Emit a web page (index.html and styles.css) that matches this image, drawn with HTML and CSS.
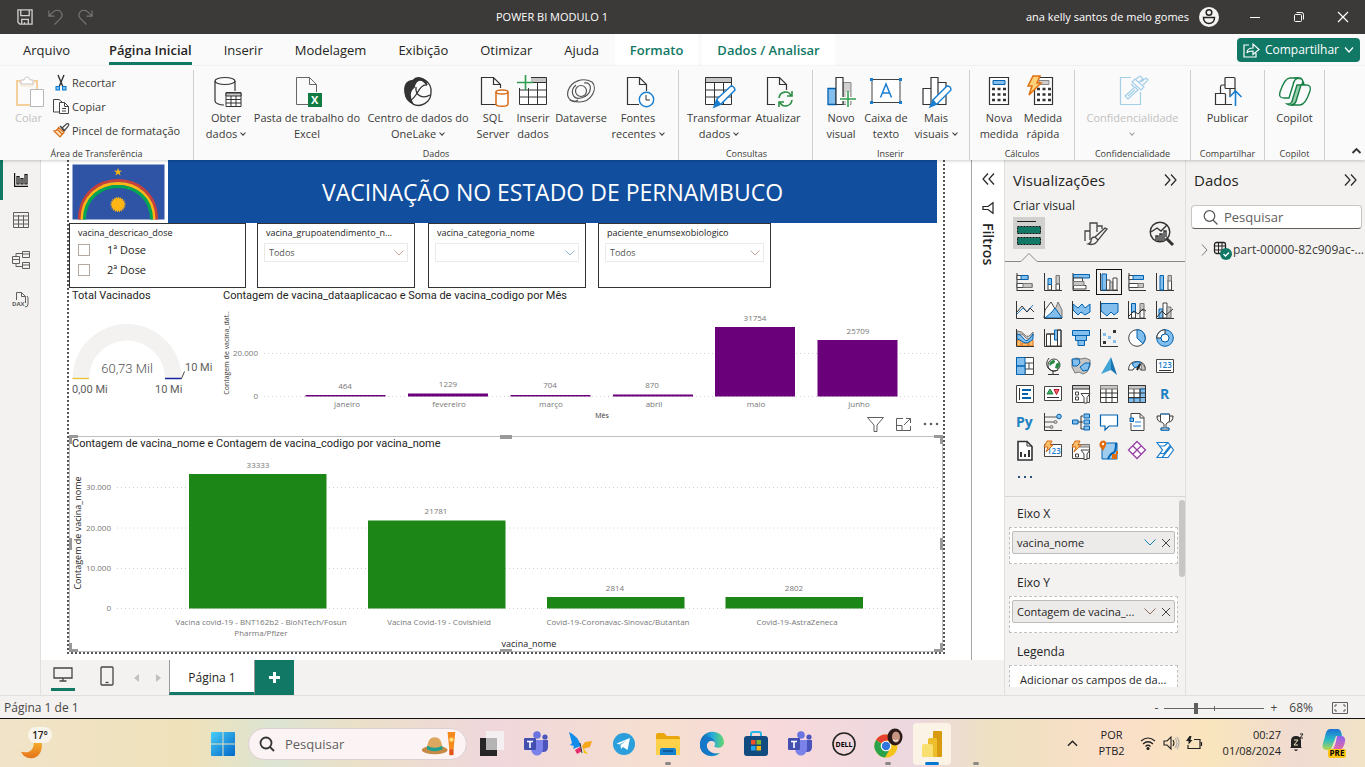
FILE: index.html
```html
<!DOCTYPE html>
<html lang="pt-BR">
<head>
<meta charset="utf-8">
<title>POWER BI MODULO 1</title>
<link rel="stylesheet" href="styles.css">
</head>
<body>
<header class="titlebar">
  <div class="quick">
    <button aria-label="Salvar"><svg width="16" height="16" viewBox="0 0 17 17" fill="none" stroke="#d2d0ce" stroke-width="1.4"><path d="M1 1h15v15H3l-2-2zM4 1v6h9V1M5 16v-5h7v5M8 14v2"/></svg></button>
    <button aria-label="Desfazer"><svg width="15" height="16" viewBox="0 0 16 16" fill="none" stroke="#797775" stroke-width="1.2"><path d="M1 1v6h6M1 7l4-4c3-3 7-3 9 0s1 5-1 7l-6 6"/></svg></button>
    <button aria-label="Refazer"><svg width="15" height="16" viewBox="0 0 16 16" fill="none" stroke="#797775" stroke-width="1.2"><path d="M15 1v6H9M15 7l-4-4C8 0 4 0 2 3s-1 5 1 7l6 6"/></svg></button>
  </div>
  <h1 class="doc-name">POWER BI MODULO 1</h1>
  <div class="account"><span>ana kelly santos de melo gomes</span>
    <svg width="20" height="20" viewBox="0 0 20 20"><circle cx="10" cy="10" r="10" fill="#f3f2f1"/><g fill="none" stroke="#222" stroke-width="1.5"><circle cx="10" cy="5.500" r="2.800"/><path d="M4.500 10.500h11c.5 8-11.500 8-11 0z"/></g></svg></div>
  <div class="win-controls">
    <button aria-label="Minimizar"><svg width="12" height="12" viewBox="0 0 12 12" stroke="#fff"><path d="M1 6.500h10"/></svg></button>
    <button aria-label="Restaurar"><svg width="12" height="12" viewBox="0 0 12 12" stroke="#fff" fill="none"><rect x="1.500" y="3.500" width="7" height="7" rx="1"/><path d="M3.500 1.500h5q2 0 2 2v5"/></svg></button>
    <button aria-label="Fechar"><svg width="12" height="12" viewBox="0 0 12 12" stroke="#fff" stroke-width="1.200"><path d="M1 1l10 10M11 1L1 11"/></svg></button>
  </div>
</header>

<nav class="tabs">
  <a href="#">Arquivo</a><a href="#" class="active">Página Inicial</a><a href="#">Inserir</a><a href="#">Modelagem</a><a href="#">Exibição</a><a href="#">Otimizar</a><a href="#">Ajuda</a><a href="#" class="context">Formato</a><a href="#" class="context">Dados / Analisar</a>
  <button class="share"><svg width="17" height="15" viewBox="0 0 17 15" fill="none" stroke="#fff" stroke-width="1.200"><path d="M6 2H1v12h12v-4M4 10c0-4 3-5 6-5V1l6 5.500-6 5V8C7 8 5 8 4 10z"/></svg>Compartilhar<svg width="10" height="6" viewBox="0 0 10 6" fill="none" stroke="#fff" stroke-width="1.200"><path d="M1 .5l4 4.500 4-4.500"/></svg></button>
</nav>

<section class="ribbon">
  <div class="group g-clip">
    <div class="cmds">
      <button class="cmd w-paste off"><svg width="30" height="32" viewBox="0 0 30 32" fill="none"><path d="M9 5H3v24h13M20 5h3v8" stroke="#f3cf9c" stroke-width="2"/><path d="M5 7h2v3h12V7h2" stroke="#f8e3c5"/><path d="M7 8V4h3c1-4 5-4 6 0h3v4z" stroke="#c8c6c4" fill="#fff"/><path d="M16.500 13.500h13v17h-13z" stroke="#b9b7b5" fill="#fff"/></svg><span>Colar</span></button>
      <div class="stack">
        <button><svg width="18" height="18" viewBox="0 0 18 18" fill="none"><path d="M5 1l5 12M11 1L6 13" stroke="#333" stroke-width="1.400"/><rect x="3" y="12.500" width="3.500" height="3.500" fill="#83beec" stroke="#0078d4"/><rect x="9.500" y="12.500" width="3.500" height="3.500" fill="#83beec" stroke="#0078d4"/></svg>Recortar</button>
        <button><svg width="18" height="18" viewBox="0 0 18 18" fill="none" stroke="#444"><path d="M6 14H.5V1.500H6L9 4M6.500 4.500h5l4 4v7h-9zM11.500 4.500v4h4M9 10.500h4M9 13h4"/></svg>Copiar</button>
        <button><svg width="18" height="18" viewBox="0 0 18 18" fill="none"><path d="M9 6l5-4.500q3 0 1 3L11 9z" stroke="#444" stroke-width="1.200"/><path d="M7 4l5 5" stroke="#444" stroke-width="1.500"/><path d="M5.500 5.500l5.500 5-4 4.500L1 9q3 0 4.500-3.500zM4 7l5 5" fill="#fce0b8" stroke="#d86c14" stroke-width="1.200"/></svg>Pincel de formatação</button>
      </div>
    </div>
    <h2>Área de Transferência</h2>
  </div>
  <div class="group g-data">
    <div class="cmds">
      <button class="cmd w50"><svg width="26" height="32" viewBox="1 0 26 32" fill="none" stroke="#333"><g stroke-width="1.200"><ellipse cx="13" cy="5" rx="10" ry="3.500"/><path d="M3 5V25c0 2 4 4 9 4M23 5V15"/></g><path d="M14 16.500h15v14H14z" fill="#fff"/><path d="M14 17h15v3H14z" fill="#c8c6c4"/><path d="M14 23.500h15M14 27h15M19 20v10.500M24 20v10.500"/></svg><span>Obter<br>dados <i></i></span></button>
      <button class="cmd w112"><svg width="26" height="32" viewBox="4 0 26 32" fill="none"><path d="M18 28.500H6.500v-27h13l7 7V16M19.500 1.500v7h7" stroke="#666"/><path d="M18 17h14v14H18z" fill="#107c41"/><text x="21" y="28" class="excel-x">X</text></svg><span>Pasta de trabalho do<br>Excel</span></button>
      <button class="cmd w110"><svg width="28" height="32" viewBox="0 0 28 32" fill="none" stroke="#333" stroke-width="1.300"><path d="M9 4.500C2 5 0 10 1 17c.6 5 4 9 8 11-4-6-4-13 1-16.500C11 7 13 4 16 4c3 0 5 2 7 5-1-5-9-11-14-4.500z" fill="#333"/><path d="M9 4.500c9-6 19 2 18 12C27 27 16 32 9 28"/><path d="M12 11c-1 9 7 12 14 8M23 9c-8-1-9 11-16 15"/></svg><span>Centro de dados do<br>OneLake <i></i></span></button>
      <button class="cmd w40"><svg width="28" height="32" viewBox="-1 0 28 32" fill="none"><path d="M16 28.500H1.500v-27h12l7 7V12M13.500 1.500v7h7" stroke="#333" stroke-width="1.200"/><path d="M16 16v12c0 3 12 3 12 0V16" fill="#fff" stroke="#d86c14" stroke-width="1.500"/><ellipse cx="22" cy="16" rx="6" ry="2" fill="#fff" stroke="#d86c14" stroke-width="1.500"/></svg><span>SQL<br>Server</span></button>
      <button class="cmd w40"><svg width="30" height="32" viewBox="1 0 30 32" fill="none"><path d="M2.500 1.500h27v27h-27z" fill="#fff" stroke="#333"/><path d="M3 2h26v4H3z" fill="#c8c6c4"/><path d="M3 6.500h27M3 14h27M3 21h27M11.500 6v23M20.500 6v23" stroke="#333"/><path d="M0 0h14v12H0z" fill="#fafafa"/><path d="M0 6.500h16M8.500-1v15" stroke="#2f9e4f" stroke-width="1.600"/></svg><span>Inserir<br>dados</span></button>
      <button class="cmd w56"><svg width="28" height="32" viewBox="0 0 28 32" fill="none" stroke="#555" stroke-width="1.200"><path d="M25 6C16 1 4 5 1 15c-2 8 5 13 10 9"/><path d="M25 6c6 6 0 20-13 20-4 0-6-1-9-2"/><path d="M17 7c9-2 9 12-3 15-8 2-12-7-5-13"/><circle cx="14" cy="15" r="5.500"/></svg><span>Dataverse</span></button>
      <button class="cmd w58"><svg width="28" height="32" viewBox="0 0 28 32" fill="none"><path d="M15 28.500H3.500v-27h12l7 7V15M15.500 1.500v7h7" stroke="#333" stroke-width="1.200"/><circle cx="22.500" cy="23.500" r="7.200" fill="#fff" stroke="#1b7fd0" stroke-width="1.400"/><path d="M22 19v5h4" stroke="#333"/></svg><span>Fontes<br>recentes <i></i></span></button>
    </div>
    <h2>Dados</h2>
  </div>
  <div class="group g-query">
    <div class="cmds">
      <button class="cmd w62"><svg width="30" height="32" viewBox="0 0 30 32" fill="none"><path d="M1.500 1.500h26v27h-26z" fill="#fff" stroke="#333"/><path d="M2 2h25v4H2z" fill="#c8c6c4"/><path d="M2 6.500h26M2 14h26M2 21h26M10.500 6v23M19.500 6v23" stroke="#333"/><path d="M10 31l3-8 14-13q3 0 4 4L17 28z" fill="#fff" stroke="#1b7fd0" stroke-width="1.500"/><path d="M10 31l3-8 4 5z" fill="#1b7fd0"/></svg><span>Transformar<br>dados <i></i></span></button>
      <button class="cmd w56"><svg width="28" height="32" viewBox="1 0 28 32" fill="none"><path d="M12 28.500H4.500v-27h12l7 7V14M16.500 1.500v7h7" stroke="#333" stroke-width="1.200"/><path d="M16 22c1-7 10-8 12-2M29 24c-1 7-10 8-12 2M29 15v5h-5M16 31v-5h5" stroke="#2f8f46" stroke-width="1.600"/></svg><span>Atualizar</span></button>
    </div>
    <h2>Consultas</h2>
  </div>
  <div class="group g-insert">
    <div class="cmds">
      <button class="cmd w44"><svg width="30" height="32" viewBox="0 0 30 32" fill="none"><path d="M2 12.500h8v16H2z" fill="#83beec" stroke="#0063b1" stroke-width="1.300"/><path d="M17 6.500h8v22h-8z" fill="#d2d0ce" stroke="#888"/><path d="M10 1.500h7v27h-7z" fill="#fff" stroke="#333" stroke-width="1.200"/><path d="M14 23h16M22 16v15" stroke="#fafafa" stroke-width="4"/><path d="M14 23h16M22 15v16" stroke="#2f9e4f" stroke-width="1.500"/></svg><span>Novo<br>visual</span></button>
      <button class="cmd w46"><svg width="32" height="32" viewBox="0 0 32 32" fill="none"><path d="M2 3.500h28v23H2z" stroke="#444" fill="#fff"/><g fill="#1b7fd0"><path d="M0 2h3v3H0zM29 2h3v3h-3zM0 25h3v3H0zM29 25h3v3h-3z"/></g><path d="M10.500 21.500L16 8l5.500 13.500M12 17h8" stroke="#1b7fd0" stroke-width="1.500"/></svg><span>Caixa de<br>texto</span></button>
      <button class="cmd w54"><svg width="30" height="32" viewBox="0 0 30 32" fill="none"><path d="M2 12.500h8v16H2zM17 6.500h8v22h-8zM10 1.500h7v27h-7z" fill="#fff" stroke="#333" stroke-width="1.200"/><path d="M9 31l3-7 14-14q4 0 4 4L16 28z" fill="#fff" stroke="#1b7fd0" stroke-width="1.400"/><path d="M9 31l3-8 4 5z" fill="#1b7fd0"/></svg><span>Mais<br>visuais <i></i></span></button>
    </div>
    <h2>Inserir</h2>
  </div>
  <div class="group g-calc">
    <div class="cmds">
      <button class="cmd w44"><svg width="30" height="32" viewBox="0 0 30 32" fill="none"><path d="M5.500 1.500h19v27h-19z" fill="#fff" stroke="#333" stroke-width="1.200"/><path d="M9 4.500h12v4H9z" fill="#83beec" stroke="#0063b1"/><path d="M8 13h14M8 18.500h14M8 24h14" stroke="#333" stroke-width="2.600" stroke-dasharray="3 2.500"/></svg><span>Nova<br>medida</span></button>
      <button class="cmd w44"><svg width="30" height="32" viewBox="3 0 30 32" fill="none"><path d="M9.500 1.500h18v27h-18z" fill="#fff" stroke="#333" stroke-width="1.200"/><path d="M14 4.500h10v4H14z" fill="#d2d0ce" stroke="#888"/><path d="M12 13h14M12 18.500h14M12 24h14" stroke="#333" stroke-width="2.600" stroke-dasharray="3 2.500"/><path d="M8 0h7l-3 7h4L4 19l3-9H3z" fill="#fcd27a" stroke="#e07010" stroke-width="1.500"/></svg><span>Medida<br>rápida</span></button>
    </div>
    <h2>Cálculos</h2>
  </div>
  <div class="group g-conf">
    <div class="cmds">
      <button class="cmd w100 off"><svg width="28" height="32" viewBox="2 0 28 32" fill="none" stroke="#a3cfe9" stroke-width="1.200"><path d="M14 1.500H3.500v27h20V16"/><path d="M8 20l10-9 3 3-10 9zM11 20l7-6"/><path d="M15 6l3-3 9 8-3 3zM19 3l4-3 3 3-4 3M24 6l5-4 2 2-5 5M14 8l3 3"/></svg><span>Confidencialidade<br><i></i></span></button>
    </div>
    <h2>Confidencialidade</h2>
  </div>
  <div class="group g-share">
    <div class="cmds">
      <button class="cmd w56"><svg width="30" height="32" viewBox="0 0 30 32" fill="none" stroke="#333" stroke-width="1.200"><rect x="12" y="1.500" width="10" height="11" rx="1"/><path d="M7.500 18v-7q0-2 2-2H12M2.500 17.500h9q1 0 1 1v10h-10zM12 28.500h7M17 12v8M22 12v3"/><path d="M22.500 30V16M16.500 21l6-6 6 6" stroke="#1b7fd0" stroke-width="1.600"/></svg><span>Publicar</span></button>
    </div>
    <h2>Compartilhar</h2>
  </div>
  <div class="group g-copilot">
    <div class="cmds">
      <button class="cmd w56"><svg width="34" height="32" viewBox="0 0 34 32" fill="none" stroke="#188046" stroke-width="1.400"><path d="M16 2h6c2 0 3 2 4 7h-7l-4 13c-1 5-2 6-6 6 3 2 7 1 9-1l7-22" fill="#9ccfb0"/><path d="M21 2h-9C7 2 4 10 2 16c-1 4 0 6 4 6h5l4-13c1-5 3-7 6-7zM13 29h9c5 0 8-8 10-14 1-4 0-6-4-6h-5l-4 13c-1 5-3 7-6 7z" fill="#fafafa"/></svg><span>Copilot</span></button>
    </div>
    <h2>Copilot</h2>
  </div>
  <button class="collapse" aria-label="Recolher"><svg width="9" height="6" viewBox="0 0 9 6" fill="none" stroke="#333" stroke-width="1.800"><path d="M.5 5l4-4 4 4"/></svg></button>
</section>

<main class="workspace">
  <nav class="views">
    <button class="on" aria-label="Relatório"><svg width="14" height="14" viewBox="0 0 14 14" fill="none" stroke="#111" stroke-width="1.200"><path d="M.6 0v13.400H14M3 3.500h2V11H3zM7 5.500h2V11H7zM11 1.500h2V11h-2z"/></svg></button>
    <button aria-label="Tabela"><svg width="16" height="16" viewBox="0 0 16 16" fill="none" stroke="#605e5c"><path d="M.5.500h15v15H.5zM.5 4h15M.5 8h15M.5 12h15M5.500 3v12M10.500 3v12"/></svg></button>
    <button aria-label="Modelo"><svg width="18" height="18" viewBox="0 0 18 18" fill="none" stroke="#605e5c"><path d="M.5 5.500h7v7h-7zM.5 8.500h7M10.500.500h7v6h-7zM10.500 3h7M10.500 11.500h7v6h-7zM10.500 14h7M4 5V2.500h6.500M4 13v2.500h6.500"/></svg></button>
    <button aria-label="DAX"><svg width="20" height="18" viewBox="0 0 20 18" fill="none" stroke="#605e5c"><path d="M5.500 9V1.500h5l4 4V12M10.500 1.500v4h4M16 5q1 1 1 3v5q0 3-3 3"/><text x="1" y="15" class="dax">DAX</text></svg></button>
  </nav>

  <div class="editor">
    <div class="surface">
      <div class="page">
        <div class="page-head">
          <svg class="flag" width="94" height="57" viewBox="0 0 94 57"><path d="M0 0h94v57H0z" fill="#fff"/><path d="M.5.500h92v55h-92z" fill="#3054a5"/><g fill="none" stroke-width="3"><path d="M7.500 55.500c0-52 77-52 77 0" stroke="#c6403c"/><path d="M10 55.500c0-48 72-48 72 0" stroke="#ffb516"/><path d="M12.500 55.500c0-44 67-44 67 0" stroke="#00a651"/></g><circle cx="46" cy="40.500" r="6.500" fill="#fdb515" stroke="#fdb515" stroke-width="2" stroke-dasharray="1 1"/><path d="M46 4l1 2.800h3l-2.400 1.800.9 2.900-2.500-1.800-2.500 1.800.9-2.900L42 6.800h3z" fill="#fdb515"/></svg>
          <h2 class="banner">VACINAÇÃO NO ESTADO DE PERNAMBUCO</h2>
        </div>
        <div class="slicers">
          <fieldset class="slicer s1"><div class="slicer-title">vacina_descricao_dose</div>
            <label><input type="checkbox">1ª Dose</label><label><input type="checkbox">2ª Dose</label></fieldset>
          <div class="slicer s2"><label class="slicer-title" for="f1">vacina_grupoatendimento_n...</label><div class="drop"><select id="f1"><option>Todos</option></select><svg width="10" height="6" viewBox="0 0 10 6" fill="none" stroke="#c9a79a"><path d="M.5.500L5 5 9.500.500"/></svg></div></div>
          <div class="slicer s3"><label class="slicer-title" for="f2">vacina_categoria_nome</label><div class="drop"><select id="f2"><option></option></select><svg width="10" height="6" viewBox="0 0 10 6" fill="none" stroke="#8fb6d0"><path d="M.5.500L5 5 9.500.500"/></svg></div></div>
          <div class="slicer s4"><label class="slicer-title" for="f3">paciente_enumsexobiologico</label><div class="drop"><select id="f3"><option>Todos</option></select><svg width="10" height="6" viewBox="0 0 10 6" fill="none" stroke="#c9a79a"><path d="M.5.500L5 5 9.500.500"/></svg></div></div>
        </div>
        <div class="row">
          <section class="gauge">
            <h3>Total Vacinados</h3>
            <svg viewBox="69 304 151 132"><path d="M72.500 378.500a54.500 54.500 0 0 1 109 0H165a38 38 0 0 0-76 0z" fill="#f3f2f1"/><path d="M72.500 378.500H89" stroke="#e8c22e" stroke-width="1.300"/><path d="M165 378.500h16.500" stroke="#12239e" stroke-width="1.500"/><path d="M181.500 378.500l3-7" stroke="#444"/>
            <text x="127" y="373" class="big">60,73 Mil</text><text x="185" y="371" class="mid">10 Mi</text><text x="72" y="393" class="mid">0,00 Mi</text><text x="155" y="393" class="mid">10 Mi</text></svg>
          </section>
          <section class="months">
            <h3>Contagem de vacina_dataaplicacao e Soma de vacina_codigo por Mês</h3>
            <svg viewBox="220 304 723 132">
              <path d="M264 353.500h676M264 396.500h676" class="gridline"/>
              <g class="tick end"><text x="258" y="356">20.000</text><text x="258" y="399">0</text></g>
              <g fill="#6b007b"><path d="M305.500 395h80v1.500h-80zM408 393.500h80v3h-80zM510.500 395h80v1.500h-80zM613 394.500h80v2h-80zM715 327h80v69.500h-80zM817.500 340h80v56.500h-80z"/></g>
              <g class="tick"><text x="345" y="389">464</text><text x="448" y="387">1229</text><text x="550" y="388">704</text><text x="652" y="388">870</text><text x="755" y="321">31754</text><text x="858" y="334">25709</text>
              <text x="347" y="407">janeiro</text><text x="449" y="407">fevereiro</text><text x="551" y="407">março</text><text x="654" y="407">abril</text><text x="756" y="407">maio</text><text x="859" y="407">junho</text></g>
              <text x="602" y="418" class="axis-small">Mês</text>
              <text transform="translate(229 353) rotate(-90)" class="axis-small">Contagem de vacina_dat..</text>
            </svg>
          </section>
        </div>
        <section class="vaccines">
          <div class="visual-tools">
            <button aria-label="Filtros"><svg width="17" height="15" viewBox="0 0 17 15" fill="none" stroke="#605e5c"><path d="M.5.500h16L10 8v6.500H7V8z"/></svg></button>
            <button aria-label="Modo de foco"><svg width="15" height="13" viewBox="0 0 15 13" fill="none" stroke="#605e5c"><path d="M7 .5H.5v12h14V8M14.500 5V.5H10M14.500.500L8 7M.5 7.500H6v5"/></svg></button>
            <button aria-label="Mais opções"><svg width="16" height="4" viewBox="0 0 16 4" fill="#605e5c"><circle cx="2" cy="2" r="1.300"/><circle cx="8" cy="2" r="1.300"/><circle cx="14" cy="2" r="1.300"/></svg></button>
          </div>
          <h3>Contagem de vacina_nome e Contagem de vacina_codigo por vacina_nome</h3>
          <svg viewBox="69 452 874 200">
            <path d="M117 487.500h822M117 528h822M117 568.500h822M117 608.500h822" class="gridline"/>
            <path d="M189 474h137.500v134.500H189zM368 520.500h137.500v88H368zM547 597h137.500v11.500H547zM725.500 597H863v11.500H725.500z" fill="#1c8617"/>
            <g class="tick end"><text x="111" y="490">30.000</text><text x="111" y="531">20.000</text><text x="111" y="571">10.000</text><text x="111" y="611">0</text></g>
            <g class="tick"><text x="258" y="468">33333</text><text x="436" y="514">21781</text><text x="615" y="591">2814</text><text x="794" y="591">2802</text>
            <text x="261" y="625">Vacina covid-19 - BNT162b2 - BioNTech/Fosun</text><text x="261" y="636">Pharma/Pfizer</text><text x="439" y="625">Vacina Covid-19 - Covishield</text><text x="618" y="625">Covid-19-Coronavac-Sinovac/Butantan</text><text x="797" y="625">Covid-19-AstraZeneca</text></g>
            <text x="529" y="647" class="axis">vacina_nome</text>
            <text transform="translate(81 533) rotate(-90)" class="axis">Contagem de vacina_nome</text>
          </svg>
          <span class="h tl"></span><span class="h tr"></span><span class="h bl-c"></span><span class="h br"></span><span class="h tc"></span><span class="h bc"></span><span class="h ml"></span><span class="h mr"></span>
        </section>
      </div>
    </div>
    <aside class="filters">
      <svg width="13" height="12" viewBox="0 0 13 12" fill="none" stroke="#252423" stroke-width="1.200"><path d="M6 .5L1 6l5 5.500M12 .5L7 6l5 5.500"/></svg>
      <svg width="12" height="12" viewBox="0 0 12 12" fill="none" stroke="#252423" stroke-width="1.200"><path d="M11 .8v10.400L6 7.500 1 7.500 1 4.500 6 4.500z"/></svg>
      <h2>Filtros</h2>
    </aside>
    <footer class="page-tabs">
      <button class="dev sel" aria-label="Computador"><svg width="20" height="15" viewBox="0 0 20 15" fill="none" stroke="#484644" stroke-width="1.300"><path d="M1 1h18v10H1zM10 11v3M6.500 14h7"/></svg></button>
      <button class="dev phone" aria-label="Celular"><svg width="14" height="20" viewBox="0 0 14 20" fill="none" stroke="#484644" stroke-width="1.300"><rect x="1" y="1" width="12" height="18" rx="1"/><path d="M5.500 16.500h3"/></svg></button>
      <button class="arr" aria-label="Anterior"><svg width="5" height="8" viewBox="0 0 5 8"><path d="M5 0v8L0 4z" fill="#c2c0be"/></svg></button>
      <button class="arr" aria-label="Próxima"><svg width="5" height="8" viewBox="0 0 5 8"><path d="M0 0v8l5-4z" fill="#c2c0be"/></svg></button>
      <button class="ptab">Página 1</button>
      <button class="add" aria-label="Nova página"><svg width="11" height="11" viewBox="0 0 11 11"><path d="M5.500 0v11M0 5.500h11" stroke="#fff" stroke-width="3"/></svg></button>
    </footer>
  </div>

  <aside class="pane viz">
    <header><h2>Visualizações</h2><svg width="13" height="12" viewBox="0 0 13 12" fill="none" stroke="#252423" stroke-width="1.200"><path d="M1 .5L6 6l-5 5.500M7 .5l5 5.500-5 5.500"/></svg></header>
    <h3>Criar visual</h3>
    <div class="modes">
      <button class="sel" aria-label="Criar visual"><svg width="24" height="25" viewBox="0 0 24 25"><path d="M0 .5h19" stroke="#222"/><g fill="#117865" stroke="#111" stroke-dasharray="2 1"><path d="M.5 5.500h23v7H.5zM.5 16.500h23v7H.5z"/></g></svg></button>
      <button aria-label="Formatar visual"><svg width="24" height="25" viewBox="0 0 24 25" fill="none" stroke="#444" stroke-width="1.300"><path d="M2 20V10h5v9M7 10V2h7v9M14 5h5v3"/><path d="M22 7L12 16q-4 0-4 4 0 2-3 3 7 2 10-4l9-11z" fill="#f3f2f1"/><path d="M12 16l3 3"/></svg></button>
      <button aria-label="Análise"><svg width="25" height="25" viewBox="0 0 25 25" fill="none" stroke="#333" stroke-width="1.400"><circle cx="11" cy="11" r="9.800"/><path d="M17 17l7 7" stroke-width="3"/><path d="M2 11l6-4 4 3 6-6M7 19v-4h2v5M11 20v-7h2v7M15 19v-9h2v6"/></svg></button>
    </div>
    <svg class="notch" viewBox="0 0 180 9" fill="none" stroke="#8a8886"><path d="M0 8.500h16l8-8 8 8h148"/></svg>
    <div class="gallery">
      <button><svg viewBox="0 0 18 18"><path d="M1 0v18M1 17.500h17" class="k"/><path d="M1 2.500h11v4H1z" class="w"/><path d="M5 2.500h7v4H5z" class="b"/><path d="M1 10.500h15v4H1z" class="w"/><path d="M7 10.500h9v4H7z" class="g"/></svg></button>
      <button><svg viewBox="0 0 18 18"><path d="M.5 0v17.500H18" class="k"/><path d="M4 11h3.500v6H4zM12 11h3.500v6H12z" class="w"/><path d="M4 5.500h3.500v6H4z" class="b"/><path d="M12 2.500h3.500v8H12z" class="g"/></svg></button>
      <button><svg viewBox="0 0 18 18"><path d="M1 0v17.500h17" class="k"/><path d="M1.500 1.500h16v3.500h-16z" class="b"/><path d="M1.500 5h9v3.500h-9zM1.500 12.500H14V16H1.500z" class="w"/><path d="M1.500 8.500H12v4H1.500z" class="g"/></svg></button>
      <button class="sel"><svg viewBox="0 0 18 18"><path d="M.5 0v17.500H18" class="k"/><path d="M2 1h4.500v16H2z" class="b"/><path d="M6.500 7h3.500v10H6.500z" class="w"/><path d="M10 9h3v8h-3z" class="g"/><path d="M13 5h4v12h-4z" class="w"/></svg></button>
      <button><svg viewBox="0 0 18 18"><path d="M1 0v17.500h17" class="k"/><path d="M1 2.500h14v4H1z" class="w"/><path d="M5 2.500h10.500v4H5z" class="b"/><path d="M1 10.500h14v4H1z" class="w"/><path d="M10 10.500h5.500v4H10z" class="g"/></svg></button>
      <button><svg viewBox="0 0 18 18"><path d="M.5 0v17.500H18" class="k"/><path d="M4 2.500h3.500V17H4z" class="b"/><path d="M12 7h3.500v10H12z" class="w"/><path d="M12 2.500h3.500V8H12z" class="g"/></svg></button>

      <button><svg viewBox="0 0 18 18"><path d="M.5 0v17.500H18" class="k"/><path d="M1 13l6-6 4 4 6-7" class="bl"/><path d="M1 11l5-6 5 6 3-4 4 4" class="k"/></svg></button>
      <button><svg viewBox="0 0 18 18"><path d="M8 17l6-16 4 8v8z" class="g"/><path d="M0 17l1-8 6-8 7 12 3 4z" class="w"/><path d="M1 17l7-6 3-4 7 10z" class="b"/><path d="M.5 0v17.500H18" class="k"/></svg></button>
      <button><svg viewBox="0 0 18 18"><path d="M1 3l5 4 4-4 3 4 5-4v8l-5 3-4-3-3 3-5-5z" class="b"/><path d="M.5 0v17.500H18" class="k"/></svg></button>
      <button><svg viewBox="0 0 18 18"><path d="M1 2.500h17V11l-4 3-3-3-4 4-6-5z" class="b"/><path d="M.5 0v17.500H18" class="k"/></svg></button>
      <button><svg viewBox="0 0 18 18"><path d="M3.500 9h4v8h-4zM12 9h4v8h-4z" class="w"/><path d="M3.500 2.500h4V11h-4z" class="b"/><path d="M12 2.500h4V9h-4z" class="g"/><path d="M.5 0v17.500H18M1 15l5-5 4 3 5-5 3 2" class="k"/></svg></button>
      <button><svg viewBox="0 0 18 18"><path d="M3 8h4v9H3z" class="b"/><path d="M7 2h4v15H7z" class="w"/><path d="M11 6h4v11h-4z" class="g"/><path d="M.5 0v17.500H18M1 16l5-6 4 4 7-6" class="k"/></svg></button>

      <button><svg viewBox="0 0 18 18"><path d="M1 2q5 0 8 4t8-3v4q-5 6-8 1T1 7z" class="g"/><path d="M1 11h4v6H1zM13 11h4v6h-4zM6 14h6v3H6z" class="o"/><path d="M1 5q4 0 7 5t9-5v5q-6 6-10 3T1 10z" class="b"/><path d="M.5 0v17.500H18" class="k"/></svg></button>
      <button><svg viewBox="0 0 18 18"><path d="M2.500 5h4v12h-4zM6.500 5h4v5h3v7h-7zM13.500 1H17v16h-3.500z" class="w"/><path d="M10.500 1h3v10h-3z" class="b"/><path d="M.5 0v17.500H18M2.500 17V5h8M13.500 17V1H17v16" class="k"/></svg></button>
      <button><svg viewBox="0 0 18 18"><path d="M.5 1.500h17v5H.5zM3.500 6.500h11v5h-11zM6 11.500h6.500v5H6z" class="b"/></svg></button>
      <button><svg viewBox="0 0 18 18"><path d="M.5 0v17.500H18" class="k"/><path d="M3 4h3v3H3zM8 7h3v3H8zM13 11h3v3h-3z" fill="#83beec"/><path d="M13 1h3v3h-3zM3 12h3v3H3z" fill="#333"/></svg></button>
      <button><svg viewBox="0 0 18 18"><circle cx="9" cy="9" r="8.300" class="w"/><path d="M9 .7a8.300 8.300 0 0 1 6 14L9 9z" class="b"/></svg></button>
      <button><svg viewBox="0 0 18 18"><circle cx="9" cy="9" r="8.300" class="b"/><path d="M9 .7A8.300 8.300 0 0 0 .7 9H5q0-4 4-4z" fill="#fff" stroke="#333"/><circle cx="9" cy="9" r="4" fill="#fff" stroke="#0063b1"/></svg></button>

      <button><svg viewBox="0 0 18 18"><path d="M.5.500h17v17H.5zM9 6h8M9 6v11M13 6v6M9 12h8" class="w"/><path d="M.5.500H9V9H.5zM.5 9H9v8.500H.5z" class="b"/></svg></button>
      <button><svg viewBox="0 0 18 18"><circle cx="10" cy="8" r="6" class="w"/><path d="M7 4q3-2 4 0 0 3-3 3L6 9q-2-3 1-5zM12 7l3-2 1 3-2 4-3-1z" fill="#2a8a45"/><path d="M5 1q-4 5-1 10 4 5 10 2M9 14v3M4 17.500h11" class="k"/></svg></button>
      <button><svg viewBox="0 0 18 18"><path d="M0 3l4-2 5 1 4-1 5 2v6l-3 6-4 2-4-2-4 1-3-6z" class="g"/><path d="M0 2h7l1 4-3 3H1zM8 10l5-4h5l-2 7-5 1z" class="b"/></svg></button>
      <button><svg viewBox="0 0 18 18"><path d="M11 0L1 17l10-4z" fill="#3fa3d6"/><path d="M11 0v13l6 5z" fill="#1b74b0"/></svg></button>
      <button><svg viewBox="0 0 18 18"><path d="M.5 13q0-8.500 8.500-8.500t8.500 8.500h-5q0-3-3.500-3t-4 3z" class="w"/><path d="M4 7q5-4 9-1l-2 4q-3-1-4 1z" class="b"/><path d="M13 6q4 2 4.500 7h-4z" class="g"/><path d="M9 13l3-6" stroke="#222" stroke-width="2"/></svg></button>
      <button><svg viewBox="0 0 18 18"><path d="M.5 2.500h17v13H.5z" class="w"/><text x="2" y="11" class="num">123</text><path d="M3 13.500h12" class="k"/></svg></button>

      <button><svg viewBox="0 0 18 18"><path d="M.5.500h17v17H.5z" class="w"/><path d="M3.500 3v12" class="k"/><path d="M6 5h9M6 9h6M6 13h9" stroke="#0063b1" stroke-width="1.800"/></svg></button>
      <button><svg viewBox="0 0 18 18"><path d="M.5 1.500h17v14H.5z" class="w"/><path d="M3 9l3-5 3 5z" fill="#3aaf63" stroke="#208040"/><path d="M10 4.500h5l-2.500 5z" fill="#f06470" stroke="#c01c2c"/><path d="M3 12.500h12" class="k"/></svg></button>
      <button><svg viewBox="0 0 18 18"><path d="M.5.500h17v17H.5z" class="w"/><path d="M.5.500h17V4H.5z" fill="#c8c6c4" stroke="#333"/><path d="M3.500 7h3v3h-3zM3.500 12h3v3h-3z" class="w"/><path d="M9 8.500h9l-3 4V18h-3v-5.500z" class="w"/></svg></button>
      <button><svg viewBox="0 0 18 18"><path d="M.5.500h17v17H.5z" class="w"/><path d="M.5.500h17V4H.5z" class="g"/><path d="M0 8h18M0 12.500h18M6 4v14M12 4v14" class="k"/></svg></button>
      <button><svg viewBox="0 0 18 18"><path d="M.5.500h17v17H.5z" class="w"/><path d="M.5.500h17V4H.5z" class="g"/><path d="M12 4h5.500v13.500h-17V13H12z" class="b"/><path d="M0 8h18M0 12.500h18M6 4v14M12 4v14M.5.500h17v17H.5z" class="k"/></svg></button>
      <button><svg viewBox="0 0 18 18"><text x="4" y="14" class="lang">R</text></svg></button>

      <button><svg viewBox="0 0 18 18"><text x="0" y="14" class="lang">Py</text></svg></button>
      <button><svg viewBox="0 0 18 18"><path d="M.5 0v17.500H18" class="k"/><path d="M1 4h12M1 9h9M1 14h5" stroke="#555"/><circle cx="15" cy="3.500" r="2.300" class="b"/><circle cx="11.500" cy="9" r="1.500" class="g"/><circle cx="7.500" cy="14" r="1.500" class="g"/></svg></button>
      <button><svg viewBox="0 0 18 18"><path d="M6 9h5M11 3H9v13h3" class="k"/><path d="M.5 7h5.500v4H.5zM12 1h5.500v4H12zM12 7h5.500v4H12zM12 13h5.500v4H12z" class="b"/></svg></button>
      <button><svg viewBox="0 0 18 18"><path d="M.5 2h17v11H9l-4 4v-4H.500z" fill="#fff" stroke="#0063b1" stroke-width="1.200"/></svg></button>
      <button><svg viewBox="0 0 18 18"><path d="M3 5V.5h9l4 4v13H3V10M12 .5V5h4" class="w"/><path d="M2 5h3.500v3.500H2z" class="b"/><path d="M7 9h6M5 13h8" stroke="#1b7fd0"/></svg></button>
      <button><svg viewBox="0 0 18 18"><path d="M4.500 3H1q0 6 4.500 6M13.500 3H17q0 6-4.500 6" class="k"/><path d="M4.500 1h9v7l-3.500 3v4h3v2H5v-2h3v-4L4.500 8z" class="w"/><path d="M5 15h8v2.500H5zM4.500 1h9" class="bl"/></svg></button>

      <button><svg viewBox="0 0 18 18"><path d="M2 .5h9l5 5V19H2z" fill="#fff" stroke="#333" stroke-width="1.600"/><path d="M11 .5V5h5" class="k"/><path d="M4 11h2v5H4zM8 13h2v3H8zM12 9h2v7h-2z" fill="#333"/></svg></button>
      <button><svg viewBox="0 0 18 18"><path d="M.5 3.500h17v12H.5z" class="w"/><text x="3" y="13" class="num">123</text><path d="M3 0h5L6 4h3l-7 7 2-5H0z" class="o"/></svg></button>
      <button><svg viewBox="0 0 18 18"><path d="M.5 3.500h17v14H.5z" class="w"/><path d="M7 3.500h10.500V6H7z" class="g"/><path d="M3.500 13h3v3h-3z" class="w"/><path d="M9 9h9l-3 4v5.500h-3V13z" class="w"/><path d="M3 0h5L6 4h3l-7 7 2-5H0z" class="o"/></svg></button>
      <button><svg viewBox="0 0 18 18"><path d="M2 2h15v16H2z" fill="#9ecdf0" stroke="#0063b1"/><path d="M8 18q2-5 5-6t3-10" fill="none" stroke="#0063b1" stroke-width="2"/><path d="M3-.5q4 0 3 5L3 10-.5 5Q-1 0 3-.5z" fill="#e06c10"/><circle cx="3" cy="3" r="1.200" fill="#fff"/><path d="M12 13h5v5h-5zM16 10h2v3h-2z" fill="#e06c10"/></svg></button>
      <button><svg viewBox="0 0 18 18"><path d="M9 .5L17.500 9 9 17.500.5 9zM5 5l8 8M13 5l-8 8" fill="#fff" stroke="#963ea5" stroke-width="1.300"/></svg></button>
      <button><svg viewBox="0 0 18 18" fill="#fff" stroke="#1b7fd0" stroke-width="1.200"><path d="M1 1.500h11L17.500 9 12 16.500H1L6.500 9z"/><path d="M3.500 5h5L12 1.500M4 12.500h4l6-8M6 16.500l9-11" fill="none"/></svg></button>
      <button class="more"><svg width="16" height="4" viewBox="0 0 16 4" fill="#2b4f75"><path d="M1 1h2v2H1zM7 1h2v2H7zM13 1h2v2h-2z"/></svg></button>
    </div>
    <div class="wells">
      <h4>Eixo X</h4>
      <div class="well"><div class="field"><span>vacina_nome</span><svg width="12" height="7" viewBox="0 0 12 7" fill="none" stroke="#1b7fb0"><path d="M.5.500L6 6 11.500.500"/></svg><svg width="8" height="8" viewBox="0 0 8 8" stroke="#444"><path d="M0 0l8 8M8 0L0 8"/></svg></div></div>
      <h4>Eixo Y</h4>
      <div class="well"><div class="field"><span>Contagem de vacina_...</span><svg width="12" height="7" viewBox="0 0 12 7" fill="none" stroke="#8a6a5a"><path d="M.5.500L6 6 11.500.500"/></svg><svg width="8" height="8" viewBox="0 0 8 8" stroke="#444"><path d="M0 0l8 8M8 0L0 8"/></svg></div></div>
      <h4>Legenda</h4>
      <div class="well last">Adicionar os campos de da...</div>
      <i class="thumb"></i>
    </div>
  </aside>

  <aside class="pane data">
    <header><h2>Dados</h2><svg width="13" height="12" viewBox="0 0 13 12" fill="none" stroke="#252423" stroke-width="1.200"><path d="M1 .5L6 6l-5 5.500M7 .5l5 5.500-5 5.500"/></svg></header>
    <label class="search"><svg width="15" height="15" viewBox="0 0 15 15" fill="none" stroke="#555" stroke-width="1.200"><circle cx="6.500" cy="6" r="5.300"/><path d="M10 10l4.500 4.500"/></svg><input type="search" placeholder="Pesquisar" aria-label="Pesquisar"></label>
    <div class="tree"><svg width="7" height="12" viewBox="0 0 7 12" fill="none" stroke="#777"><path d="M1 .5L6 6l-5 5.500"/></svg><svg width="20" height="20" viewBox="0 0 20 20"><rect x="1.500" y="2.500" width="11" height="11" rx="2" fill="none" stroke="#222" stroke-width="1.300"/><path d="M1.500 6h11M1.500 10h11M5.500 2v11M9 2v11" stroke="#222"/><circle cx="13" cy="14" r="6" fill="#117865"/><path d="M10.500 14l2 2 3.500-3.500" stroke="#fff" fill="none" stroke-width="1.400"/></svg><span>part-00000-82c909ac-...</span></div>
  </aside>
</main>

<footer class="status">
  <span>Página 1 de 1</span>
  <div class="zoom"><button>-</button><input type="range" min="10" max="200" value="68" aria-label="Zoom"><button>+</button><span>68%</span>
  <svg width="16" height="12" viewBox="0 0 16 12" fill="none" stroke="#605e5c"><path d="M.5.500h15v11H.5z"/><path d="M3 5V3h2M11 3h2v2M13 7v2h-2M5 9H3V7"/></svg></div>
</footer>

<footer class="taskbar">
  <button class="weather"><svg width="24" height="22" viewBox="0 0 24 22"><defs><linearGradient id="moon" x2="0" y2="1"><stop stop-color="#f7b52c"/><stop offset="1" stop-color="#e5731d"/></linearGradient></defs><path d="M22 0c3 12-3 20-11 20C5 20 2 17 0 13c9 2 14-2 14-10z" fill="url(#moon)"/></svg><span>17°</span></button>
  <div class="dock">
    <button><svg width="24" height="24" viewBox="0 0 24 24"><defs><linearGradient id="win" x2="1" y2="1"><stop stop-color="#48cdf8"/><stop offset="1" stop-color="#0067c8"/></linearGradient></defs><path d="M0 1q0-1 1-1h10.500v11.500H0zM12.500 0H23q1 0 1 1v10.500H12.500zM0 12.500h11.500V24H1q-1 0-1-1zM12.500 12.500H24V23q0 1-1 1H12.500z" fill="url(#win)"/></svg></button>
    <label class="tb-search"><svg width="16" height="16" viewBox="0 0 16 16" fill="none" stroke="#333" stroke-width="1.800"><circle cx="7" cy="7" r="5.500"/><path d="M11 11l4 4"/></svg><input placeholder="Pesquisar" aria-label="Pesquisar no Windows"><svg width="42" height="24" viewBox="0 0 42 28"><ellipse cx="16" cy="21" rx="15" ry="5" fill="#c58a45"/><path d="M7 19c1-9 3-13 9-13s8 4 9 13q-9 4-18 0z" fill="#dda75f"/><path d="M7 16q9 5 18 0v4q-9 5-18 0z" fill="#1fa08f"/><path d="M31 0h9l-2 20h-5z" fill="#f68a1c"/><path d="M33 20h5v7h-5z" fill="#e25517"/><circle cx="35.500" cy="9" r="2.500" fill="#ffe07a"/></svg></label>
    <button><svg width="24" height="28" viewBox="0 0 24 28"><path d="M0 8h17v18H0z" fill="#262626"/><path d="M6 1h18v19H6z" fill="#f4f4f4" opacity=".85"/><path d="M6 8h11v12H6z" fill="#b4b4b4"/></svg></button>
    <button><svg width="25" height="26" viewBox="0 0 25 26"><circle cx="13" cy="4" r="3.800" fill="#6a74e0"/><circle cx="21" cy="6" r="2.600" fill="#4b53bc"/><path d="M15 9h9v7q0 5-5 5h-4z" fill="#4b53bc"/><path d="M7 9h12v8c0 10-12 10-12 0z" fill="#7b83eb"/><rect y="7" width="12" height="12" rx="1" fill="#4450b0"/><path d="M3 10.500h6M6 10.500V17" stroke="#fff" stroke-width="1.600"/></svg></button>
    <button><svg width="24" height="24" viewBox="0 0 24 24"><path d="M1 0q9 4 12 14l-8 3 1-3-4-1 2-2z" fill="#118cea"/><path d="M14 14l3-4 7-1-2 6-7 2z" fill="#f6a71c"/><path d="M7 18l5-3 2 4-5 3z" fill="#e62e6b"/><path d="M15 16l5 6-4-1z" fill="#f5c400"/><path d="M12 11l2 10" stroke="#333"/></svg></button>
    <button><svg width="22" height="22" viewBox="0 0 22 22"><circle cx="11" cy="11" r="11" fill="#2a9fdb"/><path d="M3.500 10.500L17 5l-2.500 12-4.500-3-2 2-.5-4 6-4.500-7 4z" fill="#fff"/></svg></button>
    <button class="run"><svg width="24" height="22" viewBox="0 0 24 22"><path d="M0 2q0-2 2-2h6l3 3h11q2 0 2 2v15q0 2-2 2H2q-2 0-2-2z" fill="#e9a60d"/><path d="M0 6h24v14q0 2-2 2H2q-2 0-2-2z" fill="#ffd04a"/><path d="M4 22v-5q0-2 2-2h12q2 0 2 2v5z" fill="#1580cd"/><path d="M7 18h10" stroke="#0b4e8c" stroke-width="1.500"/></svg></button>
    <button><svg width="24" height="24" viewBox="0 0 24 24"><defs><linearGradient id="edge" x2="1"><stop stop-color="#0c59a4"/><stop offset=".5" stop-color="#25a9df"/><stop offset="1" stop-color="#63d86c"/></linearGradient></defs><path d="M0 12C1-4 23-4 24 10c0 5-5 7-9 5-1 0-1-1 0-2 1-5-6-6-8-1-2 6 4 12 13 9C13 28-1 23 0 12z" fill="url(#edge)"/><path d="M0 11c2-7 11-9 15-1-5-3-9 0-8 5 1 4 6 8 13 6C10 27-1 21 0 11z" fill="#1678c8"/></svg></button>
    <button><svg width="24" height="26" viewBox="0 0 24 26"><path d="M7 6V3q0-2 2-2h6q2 0 2 2v3" fill="none" stroke="#26b5eb" stroke-width="2"/><rect y="5" width="24" height="20" rx="3" fill="#124b80"/><path d="M7 9h4.500v4.500H7z" fill="#f1512a"/><path d="M12.500 9H17v4.500h-4.500z" fill="#80b92b"/><path d="M7 15h4.500v4.500H7z" fill="#22a7ee"/><path d="M12.500 15H17v4.500h-4.500z" fill="#fbb80e"/></svg></button>
    <button><svg width="25" height="26" viewBox="0 0 25 26"><circle cx="13" cy="4" r="3.800" fill="#6a74e0"/><circle cx="21" cy="6" r="2.600" fill="#4b53bc"/><path d="M15 9h9v7q0 5-5 5h-4z" fill="#4b53bc"/><path d="M7 9h12v8c0 10-12 10-12 0z" fill="#7b83eb"/><rect y="7" width="12" height="12" rx="1" fill="#4450b0"/><path d="M3 10.500h6M6 10.500V17" stroke="#fff" stroke-width="1.600"/></svg></button>
    <button><svg width="24" height="24" viewBox="0 0 24 24"><circle cx="12" cy="12" r="11" fill="none" stroke="#222" stroke-width="1.600"/><text x="12" y="15" class="dell">DELL</text></svg></button>
    <button class="run"><svg width="30" height="32" viewBox="-2 0 30 32"><circle cx="11" cy="18" r="11.500" fill="#f6c51b"/><path d="M11 18L1 12Q5 6 11 6.500q7 0 11 6H11z" fill="#e6402f"/><path d="M1 12q-4 7 1 13 3 4 8 4.500l5-9-4-2z" fill="#2aa34c"/><circle cx="11" cy="18" r="5.300" fill="#fff"/><circle cx="11" cy="18" r="4.200" fill="#3477dc"/><ellipse cx="20" cy="9" rx="7.500" ry="8.500" fill="#2c1b19"/><ellipse cx="21" cy="9" rx="4" ry="5.500" fill="#c99583"/><path d="M18 12q3 2 5 0" stroke="#fff" fill="none"/></svg></button>
    <button class="run current"><svg width="20" height="26" viewBox="0 0 20 26"><rect x="11" width="9" height="26" rx="1" fill="#d89a10"/><path d="M6 9q0-2 2-2h6q1 0 1 2v17H6z" fill="#edbe2c"/><path d="M0 15q0-2 2-2h7q2 0 2 2v11H1q-1 0-1-1z" fill="#f8df6f"/></svg></button>
    <button class="run" aria-label="Aplicativo"></button>
  </div>
  <div class="tray">
    <svg width="11" height="7" viewBox="0 0 12 7" fill="none" stroke="#222" stroke-width="1.500"><path d="M1 6l5-5 5 5"/></svg>
    <div class="kb">POR<br>PTB2</div>
    <div class="sys">
    <svg width="16" height="14" viewBox="0 0 16 14" fill="none" stroke="#222" stroke-width="1.200"><path d="M1 5q7-6 14 0M3 8q5-4.500 10 0M5.500 10.500q2.500-2.500 5 0"/><circle cx="8" cy="12.500" r="1" fill="#222"/></svg>
    <svg width="16" height="14" viewBox="0 0 16 14" fill="none" stroke="#222" stroke-width="1.100"><path d="M1 5h3l4-4v12L4 9H1z"/><path d="M10 4q2 3 0 6"/><path d="M12 2q4 5 0 10M14 1q4 6 0 12" stroke="#aaa"/></svg>
    <svg width="16" height="14" viewBox="0 0 16 14" fill="none" stroke="#222" stroke-width="1.200"><path d="M8 3.500h6v9H2V9M15.500 6v4"/><path d="M3.500 0L0 5h2.500v3.500L6.500 4H4.500l1-4z" fill="#222" stroke="none"/></svg></div>
    <div class="clock">00:27<br>01/08/2024</div>
    <svg width="14" height="20" viewBox="0 0 14 20" fill="#222"><path d="M1 14V8q0-5 5-5t5 5v6l1 1H0zM4 16.500h4q-2 3-4 0z"/><path d="M4 7h4l-4 5h4" stroke="#f9e4c0" fill="none"/><path d="M10 1h3l-3 4h3" stroke="#222" fill="none"/></svg>
    <svg class="cop" width="24" height="30" viewBox="0 0 24 30"><defs><linearGradient id="cop" x2="0" y2="1"><stop stop-color="#1c6fd6"/><stop offset=".5" stop-color="#28b8c8"/><stop offset="1" stop-color="#b6d64c"/></linearGradient><linearGradient id="cop2" x2="0" y2="1"><stop stop-color="#8d63ee"/><stop offset="1" stop-color="#ef6a9e"/></linearGradient></defs><path d="M8 1h8q3 0 4 7h-6l-5 14H5C-1 22 0 17 3 9q1-8 5-8z" fill="url(#cop)"/><path d="M15 8h5q4 1 3 6-2 9-8 9H9q4-2 6-15z" fill="url(#cop2)"/><rect x="6" y="21" width="18" height="9" rx="2" fill="#ffc61a"/><text x="15" y="28" class="pre">PRE</text></svg>
  </div>
</footer>
</body>
</html>
```
FILE: styles.css
```css
* { box-sizing: border-box; }
body { margin: 0; height: 100vh; overflow: hidden; display: flex; flex-direction: column; font: 12px/16px "Open Sans", "Noto Sans", sans-serif; color: #252423; background: #fff; white-space: nowrap; }
button { font: inherit; color: inherit; background: none; border: 0; padding: 0; margin: 0; display: flex; align-items: center; justify-content: center; white-space: nowrap; }
a { color: inherit; text-decoration: none; }
h1, h2, h3, h4 { margin: 0; font-weight: 400; font-size: 12px; }
svg { flex: none; display: block; overflow: visible; }
i { font-style: normal; }

.titlebar { height: 34px; flex: none; background: #3b3a39; color: #fff; display: grid; grid-template-columns: 496px 1fr auto 132px; align-items: center; font-size: 11px; }
.quick { display: flex; gap: 15px; padding-left: 17px; }
.doc-name { font-size: 11px; }
.account { display: flex; align-items: center; gap: 10px; padding-right: 14px; }
.win-controls { display: grid; grid-template-columns: repeat(3, 1fr); }

.tabs { height: 32px; flex: none; background: #fafafa; display: flex; align-items: center; padding-left: 7px; font-size: 13px; }
.tabs a { height: 32px; line-height: 32px; padding: 0 16px; }
.tabs .active { font-weight: 600; padding: 0; margin: 0 16px 0 23px; position: relative; }
.tabs .active::after { content: ""; position: absolute; left: 0; right: 0; bottom: 1px; height: 3px; background: #117865; }
.tabs .context { background: #fff; color: #117865; font-weight: 600; padding: 0 15px; }
.context + .context { margin-left: 4px; }
.share { margin-left: auto; margin-right: 5px; width: 123px; height: 24px; background: #117865; color: #fff; border-radius: 4px; font-size: 12px; gap: 5px; }

.ribbon { height: 94px; flex: none; background: #fafafa; display: flex; padding: 4px 0 0; position: relative; z-index: 2; box-shadow: 0 1px 3px #0003; color: #3b3a39; font-size: 11px; }
.group { border-right: 1px solid #d2d0ce; display: flex; flex-direction: column; justify-content: space-between; flex: none; }
.group h2 { font-size: 9px; line-height: 12px; text-align: center; }
.g-clip { width: 194px; } .g-data { width: 485px; padding-left: 7px; } .g-query { width: 134px; padding-left: 9px; } .g-insert { width: 157px; padding-left: 6px; } .g-calc { width: 105px; padding-left: 7px; } .g-conf { width: 116px; } .g-share { width: 74px; } .g-copilot { width: 60px; }
.g-conf .cmds, .g-share .cmds, .g-copilot .cmds { justify-content: center; }
.g-data h2, .g-query h2, .g-insert h2, .g-calc h2 { padding-right: 7px; }
.cmds { display: flex; }
.cmd { flex-direction: column; justify-content: flex-start; gap: 2px; padding-top: 6px; text-align: center; height: 76px; flex: none; }
.cmd i { display: inline-block; width: 4px; height: 4px; border: solid #3b3a39; border-width: 0 1px 1px 0; transform: rotate(45deg); margin: 0 1px 3px; }
.off { color: #c2c0be; } .cmd.off i { border-color: #a19f9d; }
.w-paste { width: 53px; padding-left: 4px; } .w40 { width: 40px; } .w44 { width: 44px; } .w46 { width: 46px; } .w50 { width: 50px; } .w54 { width: 54px; } .w56 { width: 56px; } .w58 { width: 58px; } .w62 { width: 62px; } .w100 { width: 100px; } .w110 { width: 110px; } .w112 { width: 112px; }
.stack { display: flex; flex-direction: column; padding-top: 1px; }
.stack button { justify-content: flex-start; height: 24px; gap: 1px; }
.excel-x { font: 700 11px "Open Sans", sans-serif; fill: #fff; }
.collapse { position: absolute; right: 4px; bottom: 6px; }

.workspace { flex: 1; min-height: 0; display: grid; grid-template-columns: 41px minmax(0, 1fr) 181px 179px; background: #f3f2f1; }
.views { border-right: 1px solid #e1dfdd; display: flex; flex-direction: column; }
.views button { height: 40px; width: 40px; border-left: 3px solid transparent; padding-right: 2px; }
.views .on { border-color: #117865; }
.dax { font: 700 6px "Open Sans", sans-serif; fill: #605e5c; stroke: none; }
.editor { display: grid; grid-template-columns: minmax(0, 1fr) 33px; grid-template-rows: 500px 1fr; }
.surface { background: #fff; padding: 0 26px; border-right: 1px solid #a6a6a6; }
.page { border: 2px dotted #555; border-top: 0; height: 494px; display: flex; flex-direction: column; }
.page-head { display: flex; gap: 2px; height: 63px; padding: 0 6px 0 3px; }
.flag { margin-top: 4px; }
.banner { flex: 1; background: #114e9e; color: #fff; font-size: 23px; line-height: 65px; text-align: center; }
.slicers { display: flex; height: 65px; color: #252423; }
.slicer { border: 1px solid #333; margin: 0; padding: 3px 8px; font-size: 9px; min-width: 0; }
.s1 { width: 177px; margin-right: 11px; } .s2 { width: 158px; margin-right: 13px; } .s3 { width: 158px; margin-right: 12px; } .s4 { width: 173px; }
.slicer-title { display: block; line-height: 12px; height: 13px; font-size: 9px; }
.s1 label { display: flex; align-items: center; gap: 17px; font-size: 11px; height: 20px; }
.s1 input { appearance: none; width: 12px; height: 12px; margin: 0; border: 1px solid #b3a9a1; background: #fff; }
.drop { position: relative; margin: 3px -2px 0; }
.drop select { appearance: none; width: 100%; height: 19px; border: 1px solid #eaeaea; background: #fff; font: 9px "Open Sans", sans-serif; color: #555; padding: 0 4px; display: block; }
.drop svg { position: absolute; right: 4px; top: 7px; }
.row { display: flex; height: 148px; }
.gauge { width: 151px; } .months { flex: 1; min-width: 0; }
.page h3 { font: 400 11px/14px Roboto, sans-serif; padding: 1px 3px; height: 16px; }
.page section > svg { width: 100%; height: auto; }
.page text { font-family: "Open Sans", sans-serif; }
.gridline { stroke: #d0d0d0; stroke-dasharray: 1 3; }
.tick { font-size: 8px; fill: #777; text-anchor: middle; } .tick.end { text-anchor: end; }
.page .big { font: 300 13px Roboto, sans-serif; fill: #555; text-anchor: middle; } .page .mid { font: 400 11px Roboto, sans-serif; fill: #605e5c; }
.axis { font-size: 9px; fill: #252423; text-anchor: middle; } .axis-small { font-size: 7px; fill: #333; text-anchor: middle; }
.vaccines { position: relative; height: 216px; box-shadow: inset 0 0 0 1px #c0c0c0; }
.visual-tools { position: absolute; right: 4px; top: -20px; display: flex; gap: 12px; align-items: center; height: 16px; }
.h { position: absolute; border: 0 solid #999; width: 9px; height: 9px; }
.tl { left: 0; top: -1px; border-width: 3px 0 0 3px; } .tr { right: 0; top: -1px; border-width: 3px 3px 0 0; } .bl-c { left: 0; bottom: 0; border-width: 0 0 3px 3px; } .br { right: 0; bottom: 0; border-width: 0 3px 3px 0; }
.tc { left: calc(50% - 6px); top: -1px; width: 12px; height: 4px; border-top-width: 4px; } .bc { left: calc(50% - 6px); bottom: 0; width: 12px; height: 3px; border-top-width: 3px; }
.ml { left: 0; top: 102px; height: 12px; width: 3px; border-left-width: 3px; } .mr { right: 0; top: 102px; height: 12px; width: 3px; border-left-width: 3px; }
.filters { background: #fff; border-right: 1px solid #e1dfdd; display: flex; flex-direction: column; align-items: center; padding-top: 13px; gap: 17px; }
.filters h2 { writing-mode: vertical-rl; font-size: 14px; font-weight: 600; margin-top: -8px; line-height: 18px; }
.page-tabs { grid-column: 1 / 3; display: flex; border-right: 1px solid #e1dfdd; }
.dev { width: 44px; height: 31px; }
.dev.sel { border-bottom: 3px solid #117865; width: 24px; margin: 0 12px 0 10px; }
.dev.phone { width: 40px; margin-right: -2px; }
.arr { width: 22px; height: 35px; }
.ptab { width: 86px; background: #fff; border-left: 1px solid #999; border-right: 1px solid #999; border-bottom: 3px solid #117865; padding-top: 4px; font-size: 12px; font-weight: 500; }
.add { width: 39px; background: #117865; }

.pane header { display: flex; justify-content: space-between; align-items: center; padding: 0 8px 0 8px; height: 39px; }
.pane header h2 { font-size: 15px; font-weight: 500; line-height: 20px; }
.viz { display: flex; flex-direction: column; min-height: 0; border-right: 1px solid #e1dfdd; }
.viz h3 { padding-left: 8px; line-height: 14px; }
.modes { display: flex; padding: 4px 8px 0; justify-content: space-between; height: 38px; }
.modes button { width: 32px; height: 32px; }
.modes .sel { background: #d2d0ce; }
.notch { width: 100%; margin-top: 2px; height: auto; }
.gallery { display: grid; grid-template-columns: repeat(6, 28px); grid-auto-rows: 28px; padding: 6px 0 4px 6px; }
.gallery svg { width: 18px; height: 18px; }
.gallery .sel { outline: 1px solid #111; outline-offset: -2px; }
.gallery .more { height: 26px; } .gallery .more svg { width: 16px; height: 4px; }
.k { fill: none; stroke: #333; } .w { fill: #fff; stroke: #444; } .b { fill: #83beec; stroke: #0063b1; } .g { fill: #c8c6c4; stroke: #797774; } .bl { fill: none; stroke: #1b7fd0; } .o { fill: #fcc06a; stroke: #d86c14; }
.num { font: 600 8px "Open Sans", sans-serif; fill: #1b7fd0; } .lang { font: 700 14px "Open Sans", sans-serif; fill: #2080c0; }
.wells { border-top: 1px solid #d8d6d4; flex: 1; min-height: 0; position: relative; overflow: hidden; padding: 5px 7px 0 4px; margin-bottom: 8px; }
.wells h4 { padding-left: 8px; line-height: 24px; height: 25px; }
.well { border: 1px dashed #c2c0be; background: #fff; height: 37px; padding: 3px 2px; margin-bottom: 7px; }
.field { border: 1px solid #bebbb8; background: #ecebe9; border-radius: 2px; height: 23px; display: flex; align-items: center; padding: 0 4px; gap: 6px; font-size: 11px; }
.field span { flex: 1; }
.last { padding: 6px 10px; font-size: 11px; }
.thumb { position: absolute; right: 0; top: 3px; width: 6px; height: 77px; border-radius: 3px; background: #c8c6c4; }
.search { margin: 6px 3px 0 5px; height: 24px; border: 1px solid #c8c6c4; border-bottom-color: #605e5c; border-radius: 4px; background: #fff; display: flex; align-items: center; padding: 0 11px; gap: 6px; }
input { font: inherit; min-width: 0; }
.search input { border: 0; background: none; padding: 0; width: 100%; font-size: 13px; outline: 0; }
input::placeholder { color: #605e5c; opacity: 1; }
.tree { display: flex; align-items: center; margin: 11px 0 0 15px; gap: 5px; }
.tree span { margin-left: -5px; color: #3b3a39; }

.status { height: 24px; flex: none; background: #f3f2f1; border-top: 1px solid #e1dfdd; border-bottom: 1px solid #111; display: flex; justify-content: space-between; align-items: center; padding: 2px 17px 0 4px; color: #484644; }
.zoom { display: flex; align-items: center; gap: 6px; }
.zoom input { appearance: none; width: 100px; height: 12px; margin: 0; background: linear-gradient(#666, #666) 50px 50% / 1px 5px no-repeat, linear-gradient(#666, #666) 0 50% / 100% 1px no-repeat; }
.zoom input::-webkit-slider-thumb { appearance: none; width: 4px; height: 11px; background: #605e5c; }
.zoom span { margin: 0 13px 0 6px; }

.taskbar { height: 48px; flex: none; display: flex; align-items: center; background: linear-gradient(90deg, #f1e3c8 0, #efe2ba 14%, #dce4d3 20%, #ebe0c8 26%, #efd7dc 36%, #f6dfd0 48%, #f7d9db 57%, #ecd8df 67%, #eee1c0 73%, #fbdfc9 82%, #f9e5bd 89%, #f0dbd2 95%, #f2e3c7 100%); color: #222; }
.weather { width: 201px; height: 48px; position: relative; justify-content: flex-start; padding-left: 21px; }
.weather span { position: absolute; left: 28px; top: 8px; width: 24px; height: 16px; border-radius: 8px; background: #faf5ec; font-size: 10px; line-height: 16px; font-weight: 600; }
.weather svg { margin-top: 14px; width: 22px; }
.dock { display: flex; align-items: center; height: 48px; padding-top: 1px; }
.dock button { width: 44px; height: 42px; position: relative; border-radius: 4px; }
.run::after { content: ""; position: absolute; bottom: 0; left: 19px; width: 6px; height: 3px; border-radius: 2px; background: #888; }
.dock .current { background: #fbf3e6; width: 38px; margin: 0 3px; }
.current::after { left: 12px; width: 14px; background: #0078d4; }
.tb-search { width: 219px; height: 32px; margin: 0 3px; border-radius: 16px; background: #fcf4f4; border: 1px solid #ded0d2; display: flex; align-items: center; padding: 0 6px 0 10px; gap: 10px; }
.tb-search input { flex: 1; border: 0; background: none; padding: 0; font-size: 13px; outline: 0; }
.dell { font: 700 7px "Open Sans", sans-serif; text-anchor: middle; } .pre { font: 700 8px "Open Sans", sans-serif; text-anchor: middle; }
.tray { margin-left: auto; display: flex; align-items: center; padding-right: 19px; font-size: 11px; }
.kb { text-align: center; margin: 0 15px 0 21px; }
.sys { display: flex; gap: 7px; }
.clock { text-align: right; margin: 0 9px 0 21px; }
.cop { margin-left: 18px; }
```
